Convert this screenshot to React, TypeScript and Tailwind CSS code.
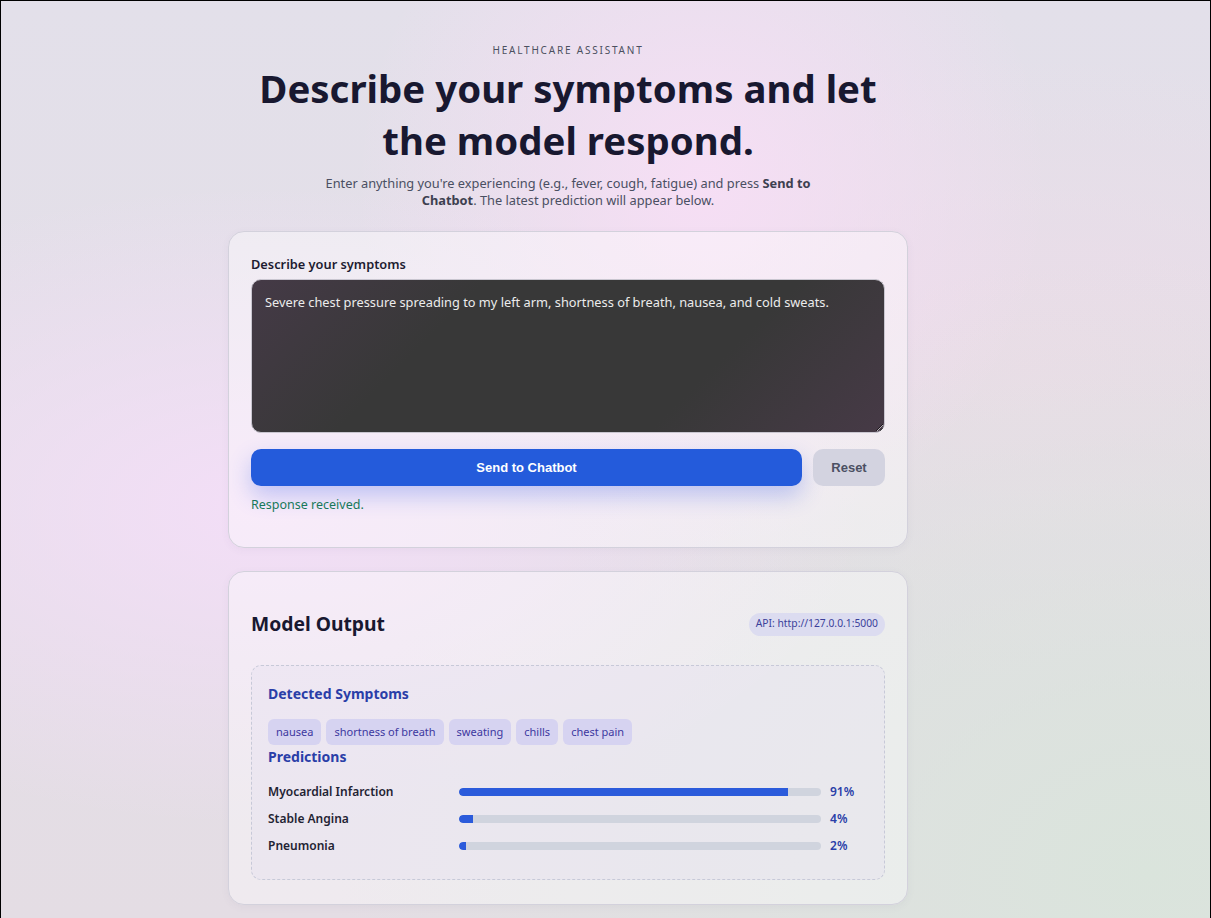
import React from "react";

const symptoms = ["nausea", "shortness of breath", "sweating", "chills", "chest pain"];
const predictions = [
  { name: "Myocardial Infarction", pct: 91 },
  { name: "Stable Angina", pct: 4 },
  { name: "Pneumonia", pct: 2 },
];

export default function App() {
  return (
    <div
      className="min-h-[918px] w-full border-t border-l border-r border-black bg-[#e2dfe8] bg-[radial-gradient(ellipse_at_22%_55%,rgba(244,222,248,0.95),transparent_45%),radial-gradient(ellipse_at_58%_20%,rgba(248,222,246,0.9),transparent_35%),radial-gradient(ellipse_at_95%_95%,rgba(218,228,220,1),transparent_50%),radial-gradient(ellipse_at_85%_40%,rgba(236,220,232,0.9),transparent_40%),linear-gradient(180deg,#e3e0ea,#e4dde4)]"
      style={{ fontFamily: '"Noto Sans", "Open Sans", sans-serif' }}
    >
      <div className="w-[1134px] flex flex-col items-center pt-[43px] pb-[14px]">
        <div className="text-[10px] leading-[12px] tracking-[0.18em] text-[#4b5060]">HEALTHCARE ASSISTANT</div>
        <h1 className="mt-[6px] text-[38.4px] leading-[52px] font-bold text-[#181830] text-center w-[680px]">
          Describe your symptoms and let
          <br />
          the model respond.
        </h1>
        <p className="mt-[9px] text-[12.8px] leading-[17px] text-[#4a4f62] text-center w-[500px]">
          Enter anything you're experiencing (e.g., fever, cough, fatigue) and press <b className="font-bold text-[#3d4050]">Send to Chatbot</b>. The latest prediction will appear below.
        </p>

        <div className="mt-[22px] w-[680px] rounded-[16px] border border-[#d3d1dc] bg-white/40 px-[22px] pt-[23px] pb-[34px] shadow-[0_2px_8px_rgba(80,70,110,0.05)]">
          <div className="text-[12.8px] leading-[18px] font-semibold text-[#1d1b30]">Describe your symptoms</div>
          <textarea
            className="mt-[6px] block w-full h-[154px] resize-y rounded-[10px] border border-[#c9c6d0] bg-[#383838] bg-[linear-gradient(135deg,rgba(70,58,72,0.9),transparent_30%,transparent_70%,rgba(72,58,72,0.9))] px-[13px] py-[12px] text-[12.8px] leading-[20px] text-[#ececec] outline-none"
            defaultValue="Severe chest pressure spreading to my left arm, shortness of breath, nausea, and cold sweats."
            style={{ fontFamily: '"Noto Sans", sans-serif' }}
          />
          <div className="mt-[16px] flex gap-[11px]" style={{ fontFamily: '"Liberation Sans", Arial, sans-serif' }}>
            <button className="flex-1 h-[37px] rounded-[10px] bg-[#245bdb] text-white text-[13px] font-bold shadow-[0_10px_22px_rgba(50,90,230,0.28)]">
              Send to Chatbot
            </button>
            <button className="w-[72px] h-[37px] rounded-[10px] bg-[#d3d3e0] text-[#4b5063] text-[13px] font-bold">
              Reset
            </button>
          </div>
          <div className="mt-[10px] text-[12.5px] leading-[17px] text-[#17785a]">Response received.</div>
        </div>

        <div className="mt-[23px] w-[680px] rounded-[16px] border border-[#d3d1dc] bg-white/40 px-[22px] pt-[38px] pb-[24px] shadow-[0_2px_8px_rgba(80,70,110,0.05)]">
          <div className="flex items-center justify-between">
            <h2 className="text-[19.3px] leading-[28px] font-bold text-[#181830]">Model Output</h2>
            <span className="rounded-full bg-[#dcdcf0] px-[7px] h-[23px] flex items-center text-[10.3px] text-[#3b3f9a]">
              API: http://127.0.0.1:5000
            </span>
          </div>
          <div className="mt-[27px] rounded-[10px] border border-dashed border-[#c7c9d8] bg-[#e6e0ef]/40 px-[16px] pt-[16px] pb-[24px]">
            <h3 className="text-[14px] leading-[24px] font-bold text-[#2a3ea8]">Detected Symptoms</h3>
            <div className="mt-[13px] flex flex-wrap gap-[5px]">
              {symptoms.map((s) => (
                <span key={s} className="h-[26px] flex items-center rounded-[6px] bg-[#d6d3f1] px-[8px] text-[11px] text-[#3d38a0]">
                  {s}
                </span>
              ))}
            </div>
            <h3 className="mt-[1px] text-[14px] leading-[22px] font-bold text-[#2a3ea8]">Predictions</h3>
            <div className="mt-[15px] flex flex-col gap-[9px]">
              {predictions.map((p) => (
                <div key={p.name} className="flex items-center h-[18px]">
                  <div className="w-[191px] text-[12px] font-semibold text-[#1f2333]">{p.name}</div>
                  <div className="w-[362px] h-[8px] rounded-full bg-[#d0d4de] overflow-hidden">
                    <div className="h-full rounded-l-full bg-[#2b5bdb]" style={{ width: `${p.pct}%` }} />
                  </div>
                  <div className="ml-[9px] text-[12px] font-semibold text-[#2a3ea8]">{p.pct}%</div>
                </div>
              ))}
            </div>
          </div>
        </div>
      </div>
    </div>
  );
}
